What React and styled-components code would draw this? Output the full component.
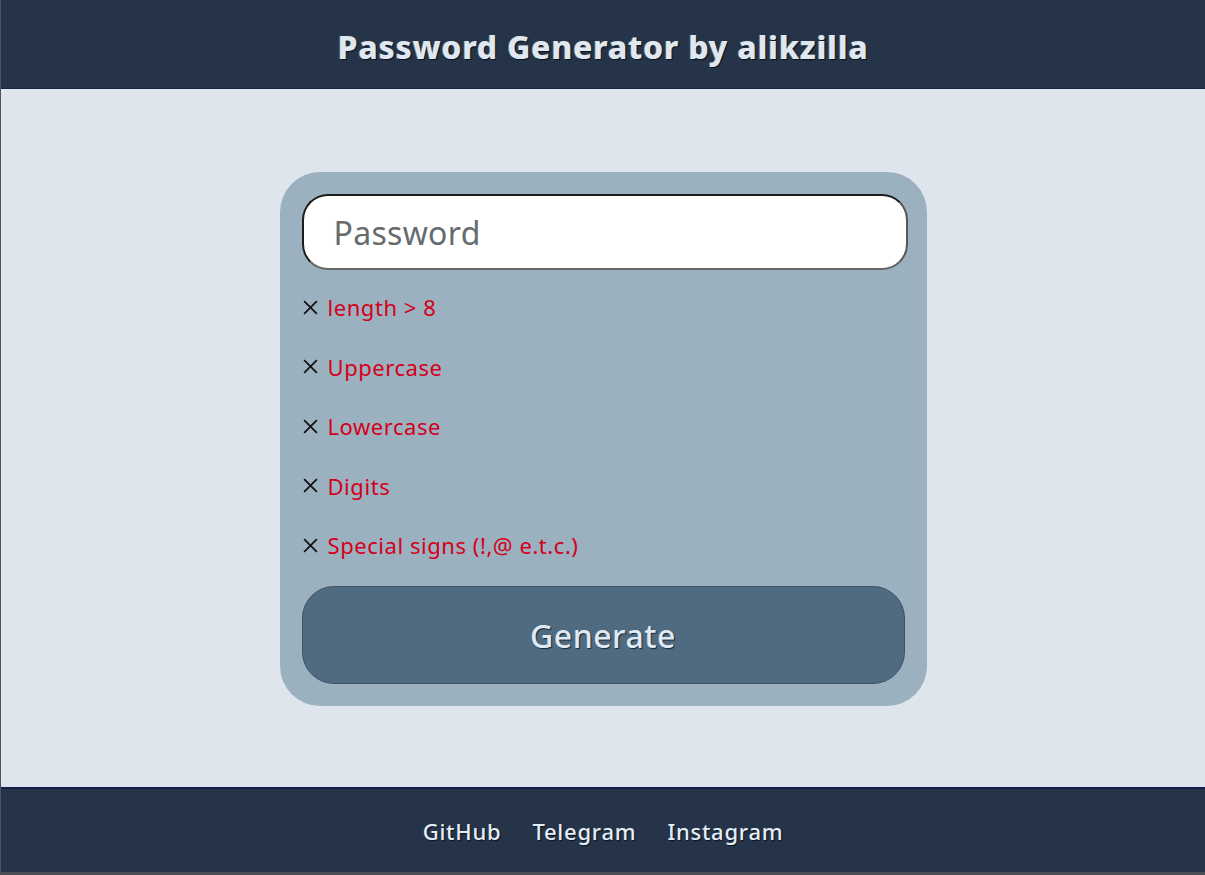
import React from 'react'
import styled, { createGlobalStyle } from 'styled-components'

const GlobalStyle = createGlobalStyle`
  html, body {
    margin: 0;
    padding: 0;
    font-family: 'Noto Sans', 'Open Sans', sans-serif;
    background: #dee5ec;
  }
  * { box-sizing: border-box; }
`

const Page = styled.div`
  min-height: 875px;
  display: flex;
  flex-direction: column;
  border-left: 1px solid #4a5662;
  border-bottom: 3px solid #4a4f55;
`

const Header = styled.header`
  height: 89px;
  padding-top: 4px;
  background-color: #263449;
  border-bottom: 1px solid #14244a;
  display: flex;
  align-items: center;
  justify-content: center;
`

const Title = styled.h1`
  margin: 0;
  font-size: 32px;
  font-weight: 800;
  color: #dfe8f1;
  letter-spacing: 0.7px;
  text-shadow: 1px 1px 1px #0b1220, -1px 0 0 rgba(200, 140, 60, 0.4);
`

const Main = styled.main`
  flex: 1;
  padding-top: 2px;
  display: flex;
  align-items: center;
  justify-content: center;
`

const Card = styled.div`
  width: 647px;
  background-color: #9bb1bf;
  border-radius: 40px;
  padding: 22px 22px 22px;
  display: flex;
  flex-direction: column;
`

const Input = styled.input`
  width: 606px;
  height: 76px;
  border-radius: 26px;
  border: 2px solid #1c1c1c;
  border-bottom-color: #666;
  border-right-color: #555;
  background: #fff;
  padding: 0 30px;
  font-family: inherit;
  font-size: 32px;
  letter-spacing: 0.3px;
  color: #333;
  outline: none;
  &::placeholder {
    color: #666b6e;
  }
`

const Checks = styled.ul`
  list-style: none;
  margin: 22px 0 0;
  padding: 0;
  display: flex;
  flex-direction: column;
  gap: 29.5px;
`

const Check = styled.li`
  display: flex;
  align-items: center;
  height: 30px;
  gap: 9px;
  font-size: 22px;
  letter-spacing: 0.55px;
  color: ${({ ok }) => (ok ? '#1f8a3a' : '#d4001a')};
`

const Cross = styled.svg`
  width: 17px;
  height: 17px;
  flex-shrink: 0;
  margin-top: 0;
`

const Button = styled.button`
  margin-top: 26px;
  width: 603px;
  height: 98px;
  border-radius: 32px;
  border: 1px solid #3d5367;
  background-color: #506b80;
  color: #dfeaf4;
  font-family: inherit;
  font-size: 32px;
  letter-spacing: 0.5px;
  font-weight: 500;
  text-shadow: 1px 1px 1px #1a2634;
  cursor: pointer;
`

const Footer = styled.footer`
  height: 85px;
  background-color: #263449;
  border-top: 2px solid #13214a;
  display: flex;
  align-items: center;
  justify-content: center;
  gap: 31px;
`

const Link = styled.a`
  color: #e3eef7;
  font-size: 22px;
  letter-spacing: 0.75px;
  font-weight: 500;
  text-decoration: none;
  text-shadow: 1px 1px 1px #0b1220;
`

const rules = ['length > 8', 'Uppercase', 'Lowercase', 'Digits', 'Special signs (!,@ e.t.c.)']

const XIcon = () => (
  <Cross viewBox="0 0 16 16">
    <path d="M2 2 L14 14 M14 2 L2 14" stroke="#111" strokeWidth="1.6" fill="none" />
  </Cross>
)

export default function App() {
  return (
    <>
      <GlobalStyle />
      <Page>
        <Header>
          <Title>Password Generator by alikzilla</Title>
        </Header>
        <Main>
          <Card>
            <Input placeholder="Password" />
            <Checks>
              {rules.map((r) => (
                <Check key={r}>
                  <XIcon />
                  <span>{r}</span>
                </Check>
              ))}
            </Checks>
            <Button>Generate</Button>
          </Card>
        </Main>
        <Footer>
          <Link href="#">GitHub</Link>
          <Link href="#">Telegram</Link>
          <Link href="#">Instagram</Link>
        </Footer>
      </Page>
    </>
  )
}
